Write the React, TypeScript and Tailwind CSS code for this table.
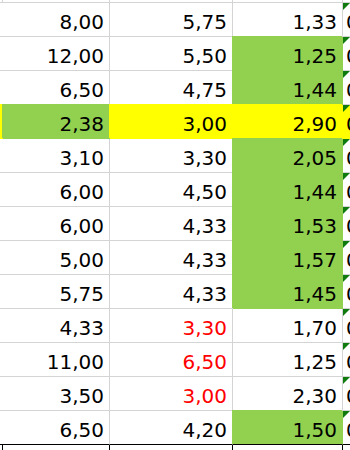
import { ReactNode } from 'react'

type Fill = 'green' | 'yellow' | null

interface Row {
  a: string
  b: string
  c: string
  aFill?: Fill
  bFill?: Fill
  cFill?: Fill
  rowFill?: Fill
  bRed?: boolean
}

const rows: Row[] = [
  { a: '8,00', b: '5,75', c: '1,33' },
  { a: '12,00', b: '5,50', c: '1,25', cFill: 'green' },
  { a: '6,50', b: '4,75', c: '1,44', cFill: 'green' },
  { a: '2,38', b: '3,00', c: '2,90', aFill: 'green', bFill: 'yellow', cFill: 'yellow', rowFill: 'yellow' },
  { a: '3,10', b: '3,30', c: '2,05', cFill: 'green' },
  { a: '6,00', b: '4,50', c: '1,44', cFill: 'green' },
  { a: '6,00', b: '4,33', c: '1,53', cFill: 'green' },
  { a: '5,00', b: '4,33', c: '1,57', cFill: 'green' },
  { a: '5,75', b: '4,33', c: '1,45', cFill: 'green' },
  { a: '4,33', b: '3,30', c: '1,70', bRed: true },
  { a: '11,00', b: '6,50', c: '1,25', bRed: true },
  { a: '3,50', b: '3,00', c: '2,30', bRed: true },
  { a: '6,50', b: '4,20', c: '1,50', cFill: 'green' },
]

function fillClasses(fill: Fill | undefined, last: boolean) {
  const bottom = last ? 'border-b-black' : ''
  if (fill === 'green') {
    return `bg-[#92d050] border-r-[#92d050] ${last ? bottom : 'border-b-[#92d050]'} shadow-[-1px_-1px_0_0_#92d050]`
  }
  if (fill === 'yellow') {
    return `bg-[#ffff00] border-r-[#ffff00] ${last ? bottom : 'border-b-[#ffff00]'} shadow-[-1px_-1px_0_0_#ffff00]`
  }
  return `bg-white border-r-[#d4d4d4] ${last ? bottom : 'border-b-[#d4d4d4]'}`
}

function Cell({ fill, last, red, children }: { fill?: Fill; last: boolean; red?: boolean; children?: ReactNode }) {
  return (
    <div
      className={`relative flex h-[34px] items-end justify-end border-r border-b pr-[5px] pb-[4px] ${fillClasses(fill, last)} ${
        red ? 'text-[#ff0000]' : 'text-black'
      }`}
    >
      {children}
    </div>
  )
}

function ErrorMark() {
  return (
    <svg className="absolute top-0 left-0" width="7" height="7" viewBox="0 0 7 7">
      <polygon points="0,0 7,0 0,7" fill="#0f7b0f" />
    </svg>
  )
}

export default function App() {
  return (
    <div className="h-[450px] w-[350px] overflow-hidden bg-white font-['DejaVu_Sans',sans-serif] text-[20px] leading-[20px]">
      <div className="grid grid-cols-[3px_107px_123px_110px_60px]">
        {/* partial row above */}
        <div className="h-[3px] border-r border-b border-[#d4d4d4]" />
        <div className="h-[3px] border-r border-b border-[#d4d4d4]" />
        <div className="h-[3px] border-r border-b border-[#d4d4d4]" />
        <div className="h-[3px] border-r border-b border-[#d4d4d4]" />
        <div className="h-[3px] border-b border-[#d4d4d4]" />

        {rows.map((r, i) => {
          const last = i === rows.length - 1
          return [
            <Cell key={`${i}-0`} fill={r.rowFill} last={last} />,
            <Cell key={`${i}-1`} fill={r.aFill} last={last}>
              {r.a}
            </Cell>,
            <Cell key={`${i}-2`} fill={r.bFill} last={last} red={r.bRed}>
              {r.b}
            </Cell>,
            <Cell key={`${i}-3`} fill={r.cFill} last={last}>
              {r.c}
            </Cell>,
            <div
              key={`${i}-4`}
              className={`relative flex h-[34px] items-end border-b pb-[4px] pl-[3px] ${
                last ? 'border-b-black' : r.rowFill ? 'border-b-[#ffff00]' : 'border-b-[#d4d4d4]'
              } ${r.rowFill ? 'bg-[#ffff00]' : 'bg-white'}`}
            >
              <ErrorMark />
              0,00
            </div>,
          ]
        })}

        {/* partial row below */}
        <div className="h-[6px] border-r border-black" />
        <div className="h-[6px] border-r border-black" />
        <div className="h-[6px] border-r border-black" />
        <div className="h-[6px] border-r border-black" />
        <div className="h-[6px]" />
      </div>
    </div>
  )
}
